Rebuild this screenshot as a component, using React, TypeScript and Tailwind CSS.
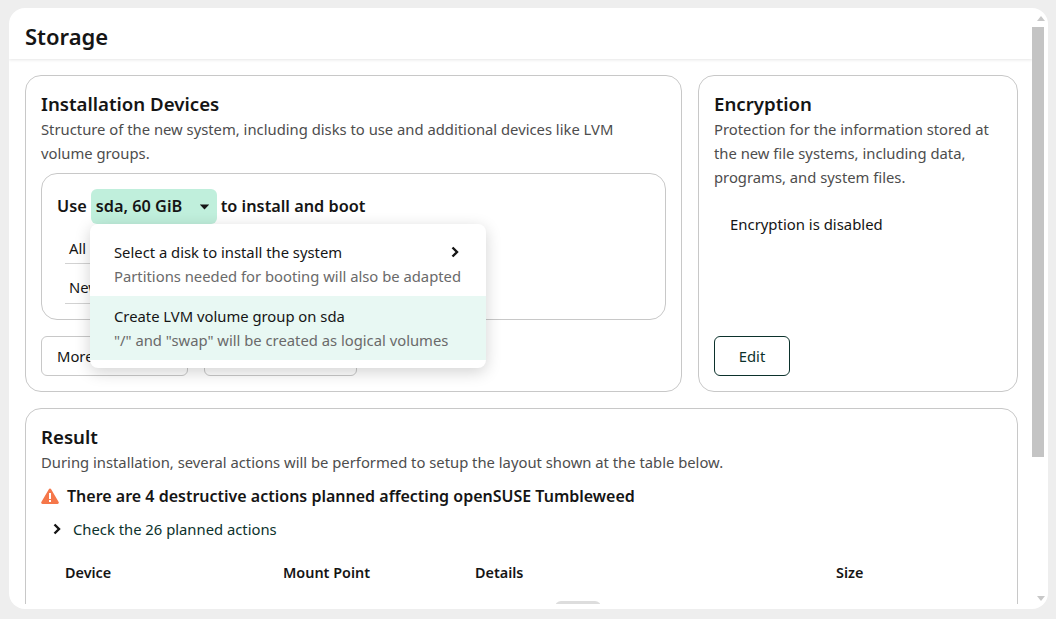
import React from "react";

const Chevron = ({ className = "" }: { className?: string }) => (
  <svg viewBox="0 0 10 12" className={className} fill="none" stroke="currentColor" strokeWidth="2.4" strokeLinecap="butt" strokeLinejoin="miter">
    <path d="M2.5 1.5 7 6l-4.500 4.500" />
  </svg>
);

const Warning = () => (
  <svg viewBox="0 0 18 16" className="h-4 w-[18px] shrink-0">
    <path d="M9 .5a1.300 1.300 0 0 1 1.150.7l7.500 12.900A1.300 1.300 0 0 1 16.500 16h-15a1.300 1.300 0 0 1-1.150-1.900L7.850 1.200A1.300 1.300 0 0 1 9 .5Z" fill="#f5774a" />
    <rect x="8" y="5" width="2" height="6" fill="#fff" />
    <rect x="8" y="12" width="2" height="2" fill="#fff" />
  </svg>
);

const Card = ({ title, desc, className = "", children }: { title: string; desc: string; className?: string; children?: React.ReactNode }) => (
  <section className={"rounded-2xl border border-[#c8c8c8] bg-white px-[15px] pt-[14px] pb-[15px] flex flex-col " + className}>
    <h3 className="text-[18.67px] leading-[27px] font-semibold text-[#151515]">{title}</h3>
    <p className="text-[14.8px] leading-[24px] text-[#4d4d4d]">{desc}</p>
    {children}
  </section>
);

export default function App() {
  return (
    <div className="h-[619px] w-[1056px] overflow-hidden bg-[#eeeeee] pt-2 pr-2 pb-[10px] pl-[9px] text-[#151515]" style={{ fontFamily: '"Noto Sans", sans-serif' }}>
      <div className="flex h-full overflow-hidden rounded-2xl bg-white">
        <div className="relative flex min-w-0 flex-1 flex-col overflow-hidden pb-[5px]">
          <header className="h-[51px] shrink-0 pl-4 pt-[10px] shadow-[0_1px_3px_rgba(0,0,0,0.1)]">
            <h2 className="text-[22px] leading-[36px] font-semibold">Storage</h2>
          </header>
          <main className="flex min-h-0 flex-1 flex-col gap-4 overflow-hidden pt-4 pr-[14px] pl-4">
            <div className="grid shrink-0 grid-cols-[657px_320px] gap-4">
              <Card title="Installation Devices" desc="Structure of the new system, including disks to use and additional devices like LVM volume groups." className="h-[317px]">
                <div className="relative mt-[8px] h-[147px] rounded-2xl border border-[#c8c8c8] px-[15px] pt-[15px]">
                  <div className="flex h-[35px] items-center gap-1 text-[16.3px] font-semibold">
                    <span>Use</span>
                    <button className="flex h-[35px] w-[126px] items-center rounded-md bg-[#c0efdc] pl-[5px] text-[16.3px] font-semibold">
                      sda, 60 GiB
                      <svg viewBox="0 0 12 7" className="ml-auto mr-[7px] h-[6px] w-[11px]"><path d="M.5.500h11L6 6.500Z" fill="#151515" /></svg>
                    </button>
                    <span>to install and boot</span>
                  </div>
                  <div className="mt-2 pl-[15px] text-[14.8px]">
                    <div className="-ml-[7px] h-[32px] w-[60px] border-b border-[#d2d2d2] pt-[5px] pl-[4px] leading-[22px]">All</div>
                    <div className="-ml-[7px] h-[40px] w-[60px] border-b border-[#d2d2d2] pt-[12px] pl-[4px] leading-[22px]">New</div>
                  </div>
                  <div className="absolute left-[48px] top-[50px] z-10 h-[144px] w-[396px] rounded-lg bg-white py-2 shadow-[0_4px_16px_rgba(0,0,0,0.18)]">
                    <div className="relative h-[64px] px-6 py-[8px] text-[14.8px] leading-[24px]">
                      <div>Select a disk to install the system</div>
                      <div className="text-[#6a6a6a]">Partitions needed for booting will also be adapted</div>
                      <Chevron className="absolute right-[26px] top-[14px] h-3 w-[10px]" />
                    </div>
                    <div className="h-[64px] bg-[#e8f8f3] px-6 py-[8px] text-[14.8px] leading-[24px]">
                      <div>Create LVM volume group on sda</div>
                      <div className="text-[#6a6a6a]">"/" and "swap" will be created as logical volumes</div>
                    </div>
                  </div>
                </div>
                <div className="mt-4 flex gap-4">
                  <button className="h-10 w-[147px] rounded-md border border-[#c8c8c8] pl-[15px] text-left text-[14.8px]">More</button>
                  <button className="h-10 w-[153px] rounded-md border border-[#c8c8c8]" />
                </div>
              </Card>
              <Card title="Encryption" desc="Protection for the information stored at the new file systems, including data, programs, and system files." className="h-[317px]">
                <p className="mt-[23px] pl-4 text-[14.9px] leading-[24px]">Encryption is disabled</p>
                <button className="mt-auto h-10 w-[76px] rounded-md border border-[#0c322c] text-[14.8px] text-[#0c322c]">Edit</button>
              </Card>
            </div>
            <Card title="Result" desc="During installation, several actions will be performed to setup the layout shown at the table below." className="relative h-[300px] shrink-0">
              <div className="mt-[8px] flex items-center gap-[8px] text-[16px] leading-[28px] font-semibold">
                <Warning />
                <span>There are 4 destructive actions planned affecting openSUSE Tumbleweed</span>
              </div>
              <div className="mt-[7px] flex items-center gap-[11px] pl-[11px] text-[14.8px] leading-[24px] text-[#0c322c]">
                <Chevron className="h-3 w-[10px] text-[#151515]" />
                <span>Check the 26 planned actions</span>
              </div>
              <div className="mt-[20px] grid grid-cols-[218px_192px_361px_100px] pl-6 text-[14.4px] leading-[24px] font-semibold">
                <span>Device</span>
                <span>Mount Point</span>
                <span>Details</span>
                <span>Size</span>
              </div>
              <div className="absolute left-[529px] top-[192px] h-6 w-[46px] rounded-md bg-[#dddddd]" />
            </Card>
          </main>
        </div>
        <aside className="flex w-4 shrink-0 flex-col items-start pt-2 pb-2 text-[#a3a3a3]">
          <div className="ml-[5px] h-0 w-0 border-x-[4px] border-b-[5px] border-x-transparent border-b-[#c8c8c8]" />
          <div className="mt-[6px] h-[430px] w-[12px] bg-[#c4c4c4]" />
          <div className="mt-auto ml-[5px] h-0 w-0 border-x-[4px] border-t-[5px] border-x-transparent border-t-[#c8c8c8]" />
        </aside>
      </div>
    </div>
  );
}
